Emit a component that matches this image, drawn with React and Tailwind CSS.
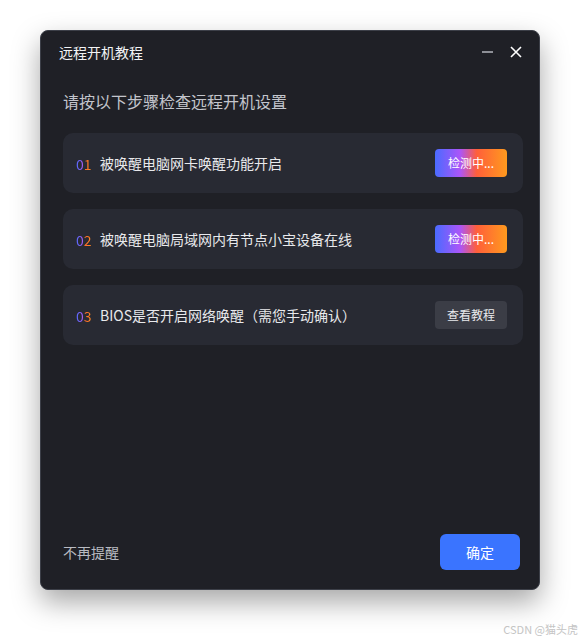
const steps = [
  { no: "01", text: "被唤醒电脑网卡唤醒功能开启", action: "检测中...", gradient: true },
  { no: "02", text: "被唤醒电脑局域网内有节点小宝设备在线", action: "检测中...", gradient: true },
  { no: "03", text: "BIOS是否开启网络唤醒（需您手动确认）", action: "查看教程", gradient: false },
];

const font = { fontFamily: '"Noto Sans CJK SC", "Noto Sans", sans-serif' };

const StepRow = ({ step }) => (
  <div className="flex items-center h-[60px] rounded-[10px] bg-[#282a33] pl-[13px] pr-4">
    <span className="w-6">
      <span className="text-[14px] bg-[linear-gradient(90deg,#4f6bff,#9c5cf6_40%,#ff6a2a_55%,#ff8a1f)] bg-clip-text text-transparent">
        {step.no}
      </span>
    </span>
    <span className="text-[14px] text-[#e8e9ec] flex-1">{step.text}</span>
    {step.gradient ? (
      <button className="w-[72px] h-[28px] rounded-[4px] text-[12px] text-white bg-[linear-gradient(90deg,#4a6bff_0%,#ac55f8_35%,#ff5f3a_58%,#ff9a1e_100%)]">
        {step.action}
      </button>
    ) : (
      <button className="w-[72px] h-[28px] rounded-[4px] text-[12px] text-[#e8e9ec] bg-[#3b3d46]">
        {step.action}
      </button>
    )}
  </div>
);

export default function App() {
  return (
    <div className="w-[580px] h-[640px] bg-white relative" style={font}>
      <div className="pt-[30px] pl-[40px]">
        <div className="w-[500px] h-[560px] rounded-[8px] bg-[#1f2026] border border-[#3c3f48] shadow-[0_12px_28px_rgba(0,0,0,0.35)] flex flex-col">
          <div className="flex items-center h-[42px] pl-[18px] pr-[17px]">
            <span className="text-[14px] text-[#f2f3f5] flex-1">远程开机教程</span>
            <span className="w-[11px] h-[2px] bg-[#8d8f96] mr-[17px]" />
            <svg width="12" height="12" viewBox="0 0 12 12" className="text-white">
              <path d="M1 1L11 11M11 1L1 11" stroke="currentColor" strokeWidth="1.6" />
            </svg>
          </div>
          <div className="pl-[22px] pr-[16px] pt-[17px]">
            <div className="text-[16px] text-[#c3c5cc] leading-[22px]">请按以下步骤检查远程开机设置</div>
            <div className="flex flex-col gap-[16px] mt-[21px]">
              {steps.map((s) => (
                <StepRow key={s.no} step={s} />
              ))}
            </div>
          </div>
          <div className="mt-auto flex items-center justify-between pl-[22px] pr-[19px] pb-[19px]">
            <span className="text-[14px] text-[#b9bbc2]">不再提醒</span>
            <button className="w-[80px] h-[36px] rounded-[6px] bg-[#3a74ff] text-[14px] text-white">确定</button>
          </div>
        </div>
      </div>
      <div className="absolute right-[2px] bottom-[3px] text-[11px] text-[#c4c4c4]">CSDN @猫头虎</div>
    </div>
  );
}
